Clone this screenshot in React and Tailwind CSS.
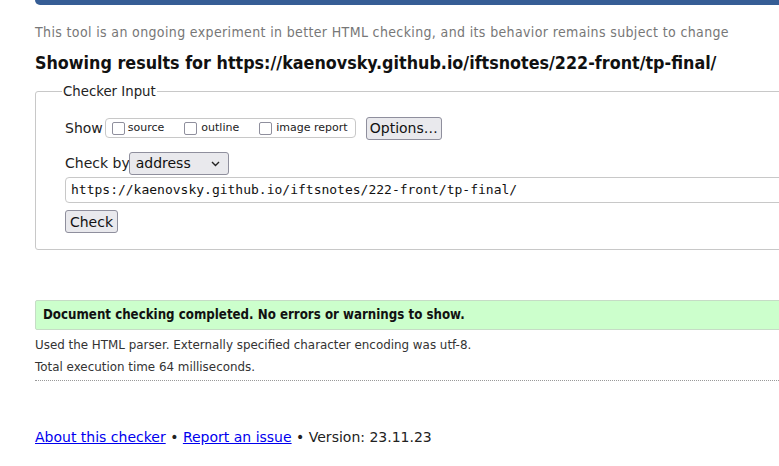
export default function App() {
  const sans = { fontFamily: '"DejaVu Sans", sans-serif' };
  const cond = { fontFamily: '"DejaVu Sans Condensed", "DejaVu Sans", sans-serif', fontStretch: 'condensed' };
  return (
    <div className="w-[779px] h-[466px] overflow-hidden bg-white" style={sans}>
      <div className="ml-[35px] w-[800px]">
        <div className="h-[5px] bg-[#365d95] rounded-bl-[6px]" />
        <p className="mt-[19px] text-[14px] tracking-[0.36px] leading-[17px] text-[#777]" style={cond}>
          This tool is an ongoing experiment in better HTML checking, and its behavior remains subject to change
        </p>
        <h2 className="mt-[11px] text-[17.75px] leading-[22px] font-bold text-[#111]" style={cond}>
          Showing results for https://kaenovsky.github.io/iftsnotes/222-front/tp-final/
        </h2>
        <fieldset className="mt-[9px] border border-[#c8c8c8] rounded-[3px] pl-[29px] pr-0 pt-[17px] pb-[15px] min-w-0">
          <legend className="ml-[-3px] px-[1px] text-[13.3px] leading-[17px] text-[#222]">Checker Input</legend>
          <div className="flex items-center h-[22px] text-[14px] text-[#222]">
            <span>Show</span>
            <div className="ml-[2px] flex items-center h-[20px] w-[251px] border border-[#c8c8c8] rounded-[4px] px-[6px] text-[11px] text-[#222]">
              <label className="flex items-center">
                <span className="w-[13px] h-[13px] border border-[#8f8f9d] rounded-[2px] bg-white" />
                <span className="ml-[3px]">source</span>
              </label>
              <label className="flex items-center ml-[20px]">
                <span className="w-[13px] h-[13px] border border-[#8f8f9d] rounded-[2px] bg-white" />
                <span className="ml-[4px]">outline</span>
              </label>
              <label className="flex items-center ml-[20px]">
                <span className="w-[13px] h-[13px] border border-[#8f8f9d] rounded-[2px] bg-white" />
                <span className="ml-[4px]">image report</span>
              </label>
            </div>
            <button className="ml-[10px] h-[23px] w-[76px] px-0 bg-[#e9e9ed] border border-[#8f8f9d] rounded-[3px] text-[14px] text-[#111] leading-none">
              Options…
            </button>
          </div>
          <div className="flex items-center mt-[13px] h-[23px] text-[14px] text-[#222]">
            <span>Check by</span>
            <div className="ml-[-1px] flex items-center justify-between w-[100px] h-[23px] bg-[#e9e9ed] border border-[#8f8f9d] rounded-[3px] pl-[6px] pr-[8px] text-[#111]">
              <span>address</span>
              <svg width="9" height="6" viewBox="0 0 9 6" fill="none"><path d="M1 1l3.5 3.5L8 1" stroke="#222" strokeWidth="1.4" /></svg>
            </div>
          </div>
          <div className="mt-[2px] h-[26px] border border-[#c8c8c8] rounded-[4px] flex items-center pl-[5px] text-[13px] text-[#111]" style={{ fontFamily: '"DejaVu Sans Mono", monospace' }}>
            https://kaenovsky.github.io/iftsnotes/222-front/tp-final/
          </div>
          <button className="mt-[7px] h-[23px] w-[53px] bg-[#e9e9ed] border border-[#8f8f9d] rounded-[3px] text-[14px] text-[#111] leading-none">
            Check
          </button>
        </fieldset>
        <div className="mt-[50px] h-[30px] bg-[#ccffcc] border border-[#c6dcc6] rounded-[2px] flex items-center pl-[7px] text-[13.2px] font-bold text-[#111]" style={cond}>
          Document checking completed. No errors or warnings to show.
        </div>
        <p className="mt-[8px] text-[11.9px] leading-[15px] text-[#333]">Used the HTML parser. Externally specified character encoding was utf-8.</p>
        <p className="mt-[7px] text-[11.9px] leading-[15px] text-[#333]">Total execution time 64 milliseconds.</p>
        <div className="mt-[5px] border-t border-dotted border-[#999]" />
        <p className="mt-[48px] text-[14px] leading-[17px] text-[#222]">
          <a href="#" className="text-[#0000ee] underline">About this checker</a>
          {' • '}
          <a href="#" className="text-[#0000ee] underline">Report an issue</a>
          {' • Version: 23.11.23'}
        </p>
      </div>
    </div>
  );
}
